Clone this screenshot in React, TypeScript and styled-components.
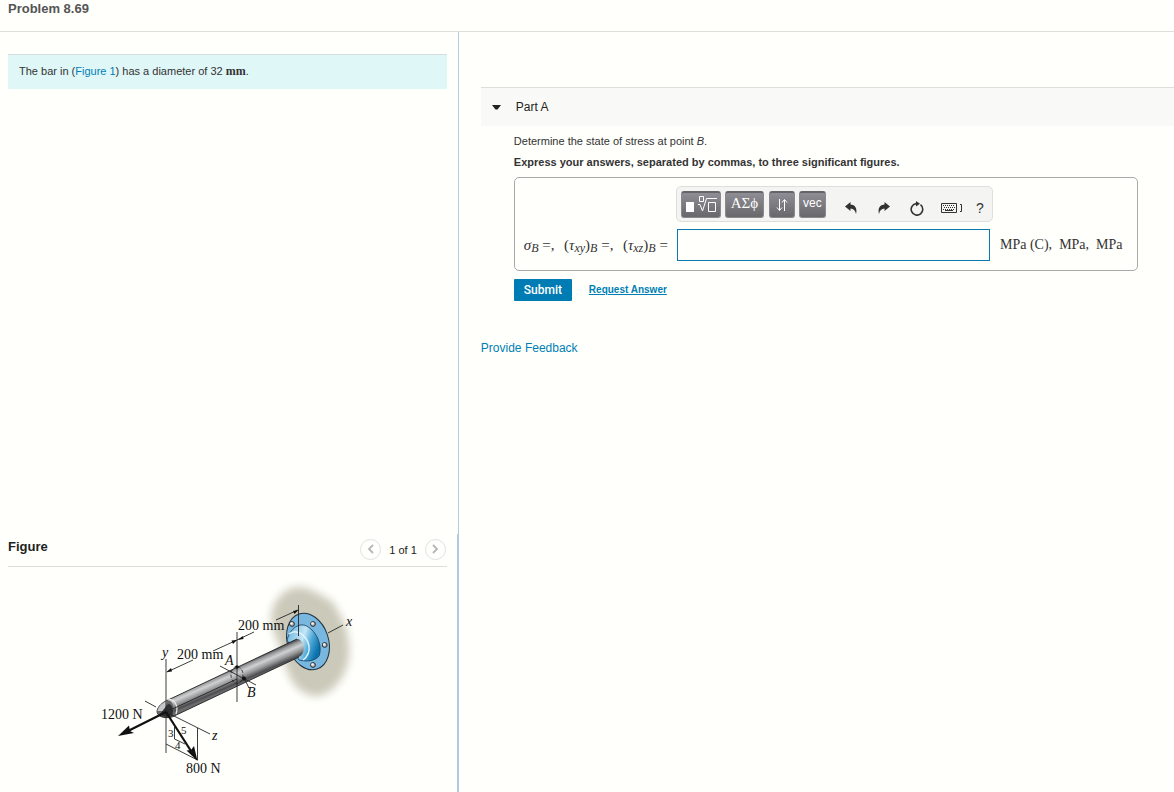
import React from 'react';
import styled, { createGlobalStyle } from 'styled-components';

const sans = '"Liberation Sans", Arial, sans-serif';
const serif = '"Liberation Serif", "Times New Roman", serif';

const GlobalStyle = createGlobalStyle`
  * { box-sizing: border-box; }
  body {
    margin: 0;
    background: #fffffc;
    color: #333;
    font-family: ${sans};
    font-size: 11px;
    line-height: 16px;
  }
  button, input { font-family: inherit; margin: 0; padding: 0; }
`;

const Page = styled.div`
  min-height: 100vh;
  display: flex;
  flex-direction: column;
`;

const Header = styled.header`
  height: 32px;
  padding: 0 8px;
  border-bottom: 1px solid #dcdfdc;
`;

const Title = styled.h1`
  margin: 0;
  font-size: 13px;
  line-height: 17px;
  color: #555;
`;

const Columns = styled.main`
  flex: 1;
  display: flex;
`;

const Left = styled.div`
  flex: 0 0 39%;
  min-width: 0;
  display: flex;
  flex-direction: column;
`;

const Intro = styled.section`
  flex: 1;
  padding: 22px 11px 0 8px;
`;

const Statement = styled.p`
  margin: 0;
  padding: 8px 11px 10px;
  border-top: 1px solid #d5dedc;
  background: #e0f7f8;
`;

const Roman = styled.span`
  font-family: ${serif};
  font-size: 12px;
  font-weight: bold;
`;

const Link = styled.a`
  color: #007fb5;
  text-decoration: none;
`;

const FigurePanel = styled.section`
  height: 258px;
  padding: 0 10px 0 8px;
  border-right: 1px solid #b3c8e3;
`;

const FigureHead = styled.div`
  height: 33px;
  display: flex;
  justify-content: space-between;
  border-bottom: 1px solid #dcdfdc;
`;

const FigureTitle = styled.h2`
  margin: 0;
  padding-top: 4px;
  font-size: 13px;
  line-height: 17px;
  color: #222;
`;

const Pager = styled.div`
  height: 30px;
  padding-right: 1px;
  display: flex;
  align-items: center;
  gap: 8px;
  color: #222;
`;

const PagerLabel = styled.span`
  padding-top: 2px;
`;

const RoundButton = styled.button`
  width: 21px;
  height: 21px;
  display: flex;
  align-items: center;
  justify-content: center;
  border: 1px solid #dfe2df;
  border-radius: 50%;
  background: transparent;
  color: #b5b7b5;
`;

const Drawing = styled.svg`
  display: block;
  width: 280px;
  height: 208px;
  margin: 13px 0 0 82px;
`;

const Right = styled.div`
  flex: 1;
  min-width: 0;
  padding: 55px 0 0 22px;
  border-left: 1px solid #b3c8e3;
`;

const PartHead = styled.div`
  height: 39px;
  padding: 0 11px;
  display: flex;
  align-items: center;
  gap: 15px;
  border-top: 1px solid #dcdfdc;
  background: #f9faf8;
`;

const Toggle = styled.button`
  width: 9px;
  height: 10px;
  display: flex;
  align-items: center;
  border: 0;
  background: transparent;
`;

const PartTitle = styled.h2`
  margin: 0;
  font-size: 12px;
  font-weight: normal;
  color: #222;
`;

const PartBody = styled.form`
  padding: 7px 36px 0 33px;
`;

const Line = styled.p<{ $strong?: boolean }>`
  margin: 0 0 5px;
  font-weight: ${(p) => (p.$strong ? 'bold' : 'normal')};
`;

const AnswerBox = styled.div`
  margin-top: 7px;
  padding: 8px 0 9px;
  border: 1px solid #a9aba9;
  border-radius: 5px;
  display: grid;
  grid-template-columns: 162px minmax(0, 1fr) 147px;
  row-gap: 7px;
`;

const Toolbar = styled.div`
  grid-column: 2;
  height: 36px;
  margin: 0 -3px 0 -1px;
  padding-left: 4px;
  display: flex;
  align-items: center;
  border: 1px solid #dcdfdc;
  border-radius: 5px;
  background: #f4f5f3;
`;

const KeyGroup = styled.div`
  margin-right: 5px;
  display: flex;
  gap: 4px;
`;

const Key = styled.button<{ $width: number }>`
  width: ${(p) => p.$width}px;
  height: 27px;
  display: flex;
  align-items: center;
  justify-content: center;
  border: 1px solid #8b8990;
  border-top: 2px solid #656467;
  border-radius: 3px;
  background: linear-gradient(#8f8d95, #68686b);
  color: #fff;
  font-size: 12px;
  line-height: 14px;
`;

const Greek = styled.span`
  height: 18px;
  font-family: ${serif};
  font-size: 15px;
`;

const VecLabel = styled.span`
  height: 18px;
`;

const Tool = styled.button<{ $width: number }>`
  flex: none;
  width: ${(p) => p.$width}px;
  height: 32px;
  padding-top: 8px;
  display: flex;
  align-items: center;
  justify-content: center;
  border: 0;
  background: transparent;
  color: #333;
  font-size: 14px;
`;

const Formula = styled.label`
  grid-column: 1;
  padding: 0 9px;
  align-self: center;
  display: flex;
  justify-content: space-between;
  font-family: ${serif};
  font-size: 15px;
  line-height: 20px;
  white-space: nowrap;

  sub { font-size: 12px; line-height: 0; font-style: italic; vertical-align: -2px; }
`;

const Entry = styled.input`
  width: 100%;
  height: 32px;
  padding: 0 6px;
  border: 1px solid #0b78b0;
  background: #fffffc;
  font-size: 14px;
`;

const Units = styled.span`
  align-self: center;
  padding-left: 10px;
  display: flex;
  gap: 7px;
  font-family: ${serif};
  font-size: 14px;
  white-space: nowrap;
`;

const Actions = styled.div`
  margin-top: 8px;
  display: flex;
  align-items: center;
  gap: 17px;
`;

const Submit = styled.button`
  width: 58px;
  height: 22px;
  border: 0;
  border-radius: 1px;
  background: #007cb4;
  color: #fff;
  font-family: Roboto, ${sans};
  font-size: 12px;
  font-weight: 500;
`;

const Request = styled(Link)`
  font-size: 10px;
  font-weight: bold;
  text-decoration: underline;
`;

const Feedback = styled.p`
  margin: 39px 0 0;
  font-size: 12px;
`;

function Chevron({ d }: { d: string }) {
  return (
    <svg width="8" height="12" viewBox="0 0 8 12" fill="none" stroke="currentColor" strokeWidth="1.8">
      <path d={d} />
    </svg>
  );
}

function Bolt({ x, y }: { x: number; y: number }) {
  return (
    <g>
      <circle cx={x} cy={y} r="2.4" fill="#a9a9a9" stroke="#222" strokeWidth="0.9" />
      <circle cx={x - 0.5} cy={y - 0.5} r="1.3" fill="#f4f4f4" />
    </g>
  );
}

function BarFigure() {
  return (
    <Drawing viewBox="90 580 280 208" role="img" aria-label="Bar fixed to a wall with two applied forces">
      <defs>
        <filter id="soft" x="-20%" y="-20%" width="140%" height="140%">
          <feGaussianBlur stdDeviation="4" />
        </filter>
        <linearGradient id="steel" gradientUnits="userSpaceOnUse" x1="233" y1="668" x2="240" y2="684">
          <stop offset="0" stopColor="#58585a" />
          <stop offset="0.14" stopColor="#98999b" />
          <stop offset="0.36" stopColor="#d0d1d3" />
          <stop offset="0.62" stopColor="#98999b" />
          <stop offset="0.88" stopColor="#4c4c4f" />
          <stop offset="1" stopColor="#6a6a6c" />
        </linearGradient>
        <linearGradient id="hub" x1="0" y1="0.1" x2="1" y2="0.5">
          <stop offset="0" stopColor="#65b3de" />
          <stop offset="0.5" stopColor="#c4e6f6" />
          <stop offset="0.75" stopColor="#4ea8d6" />
          <stop offset="1" stopColor="#0a73af" />
        </linearGradient>
      </defs>

      <path
        d="M296 587C283 589 268 605 272 624C275 638 282 649 286 666C290 685 304 697 319 696C336 692 351 670 349 647C348 622 338 614 333 602C324 598 311 586 296 587Z"
        fill="#cbc9b9"
        filter="url(#soft)"
      />

      <ellipse cx="308" cy="641.5" rx="20.5" ry="29" transform="rotate(-18 308 641.5)" fill="#78b8e0" stroke="#24333d" />
      <path d="M287 640C290 630 296 624 304 625C316 629 323 645 319 656C315 661 307 662 299 660Z" fill="url(#hub)" stroke="#173f58" strokeWidth="0.8" />
      <path d="M289 634C296 628 307 635 309 646C310 653 307 657 303 660" fill="none" stroke="#e0f5ff" strokeWidth="1.4" />
      <Bolt x={292} y={624} />
      <Bolt x={313} y={624} />
      <Bolt x={324.7} y={645} />
      <Bolt x={313} y={665} />

      <path d="M168 700L297 639C304 639 307 653 299 657L172 717C163 719 157 716 157 711C158 706 163 702 168 700Z" fill="url(#steel)" />
      <path d="M168 700L297 639M299 657L172 717C163 719 157 716 157 711C158 706 163 702 168 700" fill="none" stroke="#222" strokeWidth="0.9" />
      <path d="M157 711C158 706 163 702 168 700C173 701 175 708 173 716C167 718 158 716 157 711Z" fill="#666769" />
      <path d="M157.500 711C159 705 163 703 167 701L165 711Z" fill="#c5c7c8" />
      <path d="M160 714L168 704C173 704 174 711 172 716C167 718 162 717 160 714Z" fill="#303033" />
      <path d="M168 700C174 698 179 706 176 714" fill="none" stroke="#eee" strokeWidth="1.2" />

      <g fill="none" stroke="#262626" strokeWidth="0.9">
        <path d="M166 659V753M237 632V702M298.500 605V636" />
        <path d="M167 672L193 660M213 651L237 640L254 632M276 620L298 610" />
        <path d="M166 712L237 679M145 701L156 707M166 712L210 734" />
        <path d="M328 633L343 625M220 666L256 685" />
        <path d="M197.500 728V760L166 744M174.500 727V739L185 744" />
        <path d="M244 678L249 688" />
        <ellipse cx="237" cy="675" rx="6" ry="8.500" strokeDasharray="3 2" />
      </g>
      <g stroke="#111" strokeWidth="2.200">
        <path d="M166 712L127 731.500" />
        <path d="M166 712L191 751" />
      </g>
      <g fill="#111">
        <path d="M118 736L129 725.500L130 731L134 733Z" />
        <path d="M197.500 761L186.500 750.500L191 750L194 746Z" />
        <path d="M166.500 672L171 668L172 671.500Z" />
        <path d="M237 640L231.500 640.500L233 644Z" />
        <path d="M237.500 640L243 636L243.500 639Z" />
        <path d="M298.500 610L293 611L294.500 614Z" />
        <circle cx="237" cy="667" r="1.800" />
        <circle cx="244" cy="678.500" r="2" />
      </g>

      <g fill="#111" fontFamily={serif} fontSize="14">
        <text x="238" y="630">200 mm</text>
        <text x="177" y="659">200 mm</text>
        <text x="101" y="719">1200 N</text>
        <text x="186" y="773">800 N</text>
        <g fontStyle="italic">
          <text x="162" y="657">y</text>
          <text x="225" y="665">A</text>
          <text x="247" y="697">B</text>
          <text x="346" y="626">x</text>
          <text x="212" y="740">z</text>
        </g>
        <g fontSize="11">
          <text x="168" y="737">3</text>
          <text x="181" y="734">5</text>
          <text x="175" y="749">4</text>
        </g>
      </g>
    </Drawing>
  );
}

export default function App() {
  return (
    <>
      <GlobalStyle />
      <Page>
        <Header>
          <Title>Problem 8.69</Title>
        </Header>
        <Columns>
          <Left>
            <Intro>
              <Statement>
                The bar in (<Link href="#figure">Figure 1</Link>) has a diameter of 32 <Roman>mm</Roman>.
              </Statement>
            </Intro>
            <FigurePanel id="figure">
              <FigureHead>
                <FigureTitle>Figure</FigureTitle>
                <Pager>
                  <RoundButton type="button" aria-label="Previous figure">
                    <Chevron d="M6 2L2 6L6 10" />
                  </RoundButton>
                  <PagerLabel>1 of 1</PagerLabel>
                  <RoundButton type="button" aria-label="Next figure">
                    <Chevron d="M2 2L6 6L2 10" />
                  </RoundButton>
                </Pager>
              </FigureHead>
              <BarFigure />
            </FigurePanel>
          </Left>
          <Right>
            <PartHead>
              <Toggle type="button" aria-label="Collapse Part A">
                <svg width="9" height="5" viewBox="0 0 9 5" fill="#222">
                  <path d="M0 0H9L5.500 4.500H3.500Z" />
                </svg>
              </Toggle>
              <PartTitle>Part A</PartTitle>
            </PartHead>
            <PartBody onSubmit={(e: React.FormEvent) => e.preventDefault()}>
              <Line>
                Determine the state of stress at point <i>B</i>.
              </Line>
              <Line $strong>Express your answers, separated by commas, to three significant figures.</Line>
              <AnswerBox>
                <Toolbar role="toolbar" aria-label="Equation tools">
                  <KeyGroup>
                    <Key type="button" $width={40} aria-label="Templates">
                      <svg width="32" height="20" viewBox="0 0 32 20" fill="none" stroke="#fff">
                        <path d="M1 7H9V17H1Z" fill="#fff" stroke="none" />
                        <path d="M14.500 1.500H18.500V6.500H14.500ZM23.500 7.500H30.500V16.500H23.500Z" />
                        <path d="M13 9.500H15L17.500 16L21.500 3.500H32" />
                      </svg>
                    </Key>
                    <Key type="button" $width={39}>
                      <Greek>ΑΣϕ</Greek>
                    </Key>
                  </KeyGroup>
                  <KeyGroup>
                    <Key type="button" $width={26} aria-label="Subscript and superscript">
                      <svg width="12" height="14" viewBox="0 0 12 14" fill="none" stroke="#fff">
                        <path d="M3.500 1V12M1 9.500L3.500 12.500L6 9.500M8.500 13V2M6 4.500L8.500 1.500L11 4.500" />
                      </svg>
                    </Key>
                    <Key type="button" $width={27}>
                      <VecLabel>vec</VecLabel>
                    </Key>
                  </KeyGroup>
                  <Tool type="button" $width={41} aria-label="Undo">
                    <svg width="12" height="12" viewBox="0 0 12 12" fill="currentColor">
                      <path d="M0 4.500L5.500 0V2.600C10 2.800 12.500 6.500 11 12C10.200 8.500 8.500 6.700 5.500 6.600V9Z" />
                    </svg>
                  </Tool>
                  <Tool type="button" $width={25} aria-label="Redo">
                    <svg width="12" height="12" viewBox="0 0 12 12" fill="currentColor">
                      <path d="M12 4.500L6.500 0V2.600C2 2.800 -0.500 6.500 1 12C1.800 8.500 3.500 6.700 6.500 6.600V9Z" />
                    </svg>
                  </Tool>
                  <Tool type="button" $width={40} aria-label="Reset">
                    <svg width="14" height="15" viewBox="0 0 14 15" fill="none" stroke="currentColor" strokeWidth="1.6">
                      <path d="M10.500 3.700A5.800 5.800 0 1 1 6 2.600" />
                      <path d="M6 0L10 2.700L6 5.500Z" fill="currentColor" stroke="none" />
                    </svg>
                  </Tool>
                  <Tool type="button" $width={31} aria-label="Keyboard shortcuts">
                    <svg width="22" height="12" viewBox="0 0 22 12" fill="none" stroke="currentColor">
                      <path d="M0.500 1.500H15.500V10.500H0.500Z" />
                      <path d="M2 3.500H14M3 5.500H14M2 7.500H14" strokeDasharray="1 1" />
                      <path d="M4 8.500H12M19 2.500H20.500V9.500H19" />
                    </svg>
                  </Tool>
                  <Tool type="button" $width={24} aria-label="Help">?</Tool>
                </Toolbar>
                <Formula htmlFor="answer">
                  <span><i>σ</i><sub>B</sub> =,</span>
                  <span>(<i>τ</i><sub>xy</sub>)<sub>B</sub> =,</span>
                  <span>(<i>τ</i><sub>xz</sub>)<sub>B</sub> =</span>
                </Formula>
                <Entry id="answer" type="text" />
                <Units>
                  <span>MPa (C),</span>
                  <span>MPa,</span>
                  <span>MPa</span>
                </Units>
              </AnswerBox>
              <Actions>
                <Submit type="submit">Submit</Submit>
                <Request href="#request">Request Answer</Request>
              </Actions>
            </PartBody>
            <Feedback>
              <Link href="#feedback">Provide Feedback</Link>
            </Feedback>
          </Right>
        </Columns>
      </Page>
    </>
  );
}
